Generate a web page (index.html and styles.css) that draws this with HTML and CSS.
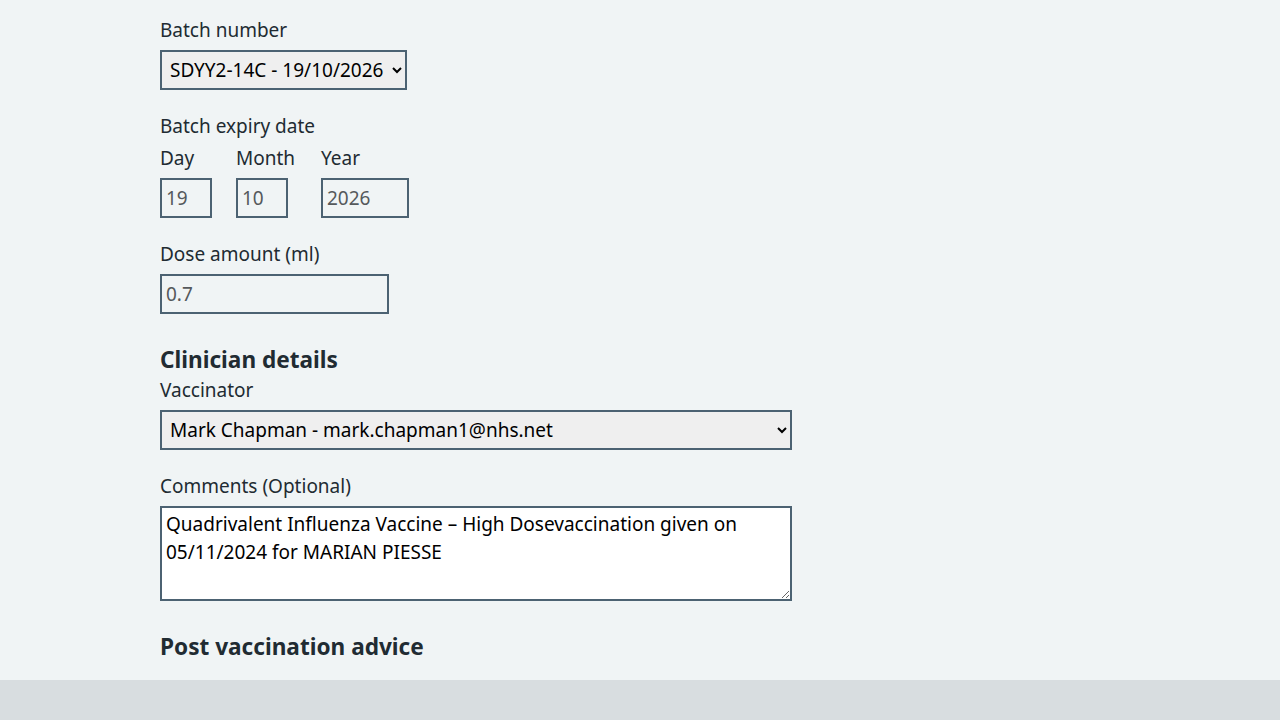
FILE: index.html
```html
<!DOCTYPE html>
<html lang="en">
<head>
<meta charset="utf-8">
<title>Vaccination record</title>
<link rel="stylesheet" href="styles.css">
</head>
<body>
<main class="page">
  <div class="form">
    <div class="group">
      <label class="label" for="batch">Batch number</label>
      <select class="select select-batch" id="batch">
        <option>SDYY2-14C - 19/10/2026</option>
      </select>
    </div>

    <fieldset class="group fieldset">
      <legend class="label legend">Batch expiry date</legend>
      <div class="date">
        <div class="date-item">
          <label class="label" for="day">Day</label>
          <input class="input w2" id="day" value="19" disabled>
        </div>
        <div class="date-item date-month">
          <label class="label" for="month">Month</label>
          <input class="input w2" id="month" value="10" disabled>
        </div>
        <div class="date-item">
          <label class="label" for="year">Year</label>
          <input class="input w4" id="year" value="2026" disabled>
        </div>
      </div>
    </fieldset>

    <div class="group">
      <label class="label" for="dose">Dose amount (ml)</label>
      <input class="input w10" id="dose" value="0.7" disabled>
    </div>

    <h2 class="heading">Clinician details</h2>
    <div class="group">
      <label class="label" for="vacc">Vaccinator</label>
      <select class="select select-wide" id="vacc">
        <option>Mark Chapman - mark.chapman1@nhs.net</option>
      </select>
    </div>

    <div class="group">
      <label class="label" for="comments">Comments (Optional)</label>
      <textarea class="textarea" id="comments">Quadrivalent Influenza Vaccine – High Dosevaccination given on 05/11/2024 for MARIAN PIESSE</textarea>
    </div>

    <h2 class="heading heading-last">Post vaccination advice</h2>
  </div>
</main>
<footer class="footer"></footer>
</body>
</html>
```

FILE: styles.css
```css
html, body {
  margin: 0;
  padding: 0;
}
body {
  background: #f0f4f5;
  color: #212b32;
  font-family: "Noto Sans", "Liberation Sans", sans-serif;
  font-size: 19px;
}
.page {
  padding: 16px 0 17px 160px;
}
.form {
  width: 632px;
}
.group {
  margin: 0 0 22px 0;
}
.fieldset {
  border: 0;
  padding: 0;
  min-width: 0;
}
.label {
  display: block;
  font-size: 19px;
  line-height: 28px;
  margin-bottom: 6px;
  color: #212b32;
}
.legend {
  padding: 0;
  margin-bottom: 4px;
}
.date {
  display: flex;
  gap: 24px;
}
.date-item {
  display: flex;
  flex-direction: column;
  align-items: flex-start;
}
.date-month {
  min-width: 61px;
}
.input {
  box-sizing: border-box;
  height: 40px;
  border: 2px solid #4c6272;
  background: transparent;
  padding: 4px;
  font-family: inherit;
  font-size: 19px;
  color: #55595c;
  margin: 0;
  border-radius: 0;
}
.w2 { width: 52px; }
.w4 { width: 88px; }
.w10 { width: 229px; }
.select {
  box-sizing: border-box;
  height: 40px;
  border: 2px solid #4c6272;
  background-color: #efefef;
  padding: 0 4px 0 4px;
  font-family: inherit;
  font-size: 19px;
  color: #000;
  border-radius: 0;
  margin: 0;
}
.select-batch { width: 247px; }
.select-wide { width: 632px; }
.textarea {
  display: block;
  box-sizing: border-box;
  width: 632px;
  height: 95px;
  border: 2px solid #4c6272;
  background: #fff;
  padding: 2px 4px 0 4px;
  font-family: inherit;
  font-size: 19px;
  line-height: 28px;
  color: #000;
  margin: 0;
  border-radius: 0;
}
.heading {
  font-size: 22.6px;
  line-height: 32px;
  font-weight: 700;
  margin: 30px 0 0 0;
  color: #212b32;
}
.footer {
  height: 60px;
  background: #d8dde0;
}
```
